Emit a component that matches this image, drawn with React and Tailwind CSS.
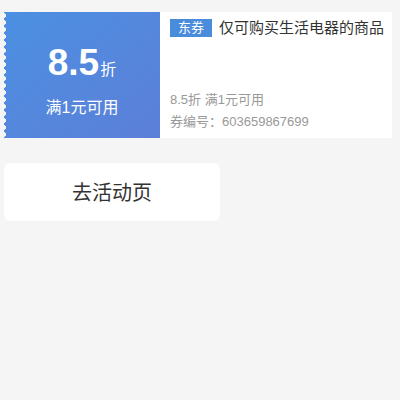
import React from 'react';

export default function App() {
    return (
        <div className="w-[400px] h-[400px] bg-[#f5f5f5] pt-3 pl-1" style={{ fontFamily: '"Liberation Sans", "Noto Sans CJK SC", sans-serif' }}>
            <div className="flex h-[126px] bg-white mr-2">
                <div className="relative w-[156px] shrink-0 bg-gradient-to-br from-[#4a90e2] to-[#5c7fd8] flex flex-col items-center justify-center text-white">
                    <div className="absolute left-0 top-0 bottom-0 w-[3px] bg-[radial-gradient(circle_at_0_50%,#f5f5f5_2px,transparent_2.5px)] bg-[length:4px_7px]"></div>
                    <div className="flex items-baseline mt-[9px]">
                        <span className="text-[37px] font-bold leading-none">8.5</span>
                        <span className="text-[16px] ml-[1px]">折</span>
                    </div>
                    <div className="text-[16px] mt-[18px] leading-none">满1元可用</div>
                </div>
                <div className="flex-1 flex flex-col pl-[10px] pt-[7px] pb-[5px]">
                    <div className="flex items-center">
                        <span className="bg-[#4a8cdc] text-white text-[13px] leading-[18px] px-[8px]">东券</span>
                        <span className="ml-[7px] text-[15px] text-[#333] leading-[18px]">仅可购买生活电器的商品</span>
                    </div>
                    <div className="mt-auto text-[13px] text-[#999] leading-[22px]">
                        <div>8.5折 满1元可用</div>
                        <div>券编号：603659867699</div>
                    </div>
                </div>
            </div>
            <div className="mt-[25px] w-[216px] h-[58px] bg-white rounded-md flex items-center justify-center text-[20px] text-[#333]">
                <span className="mt-[1px]">去活动页</span>
            </div>
        </div>
    );
}
